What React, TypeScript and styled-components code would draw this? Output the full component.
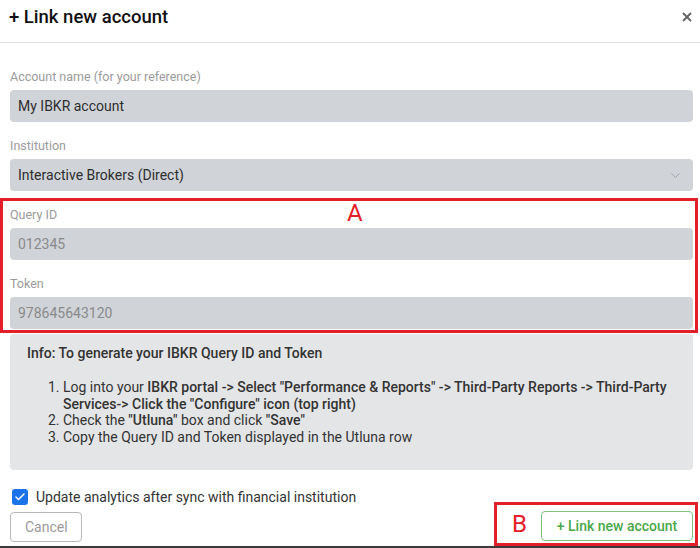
import React from 'react'
import styled, { createGlobalStyle } from 'styled-components'
import { X, ChevronDown, Check } from 'lucide-react'

const GlobalStyle = createGlobalStyle`
   html, body {
      margin: 0;
      padding: 0;
      background: #fff;
      font-family: Roboto, "Liberation Sans", Arial, sans-serif;
      color: #333;
   }
   * { box-sizing: border-box; }
`

const Modal = styled.div`
   width: 700px;
   height: 548px;
   overflow: hidden;
   display: flex;
   flex-direction: column;
   border-bottom: 2px solid #3a3a3a;
`

const Header = styled.div`
   height: 43px;
   display: flex;
   align-items: center;
   justify-content: space-between;
   padding: 0 6px 8px 9px;
   border-bottom: 1px solid #e2e2e2;
`

const Title = styled.h2`
   margin: 0;
   font-size: 18.5px;
   font-weight: 500;
   color: #111;
   line-height: 22px;
`

const Close = styled.button`
   border: 0;
   background: none;
   padding: 0;
   display: flex;
   color: #666;
   cursor: pointer;
`

const Body = styled.div`
   padding: 0 7px 0 10px;
   display: flex;
   flex-direction: column;
`

const Label = styled.label<{ $top?: number }>`
   display: block;
   font-size: 12.5px;
   line-height: 16px;
   color: #9b9b9b;
   margin: ${p => p.$top ?? 16}px 0 5px;
`

const Input = styled.div<{ $muted?: boolean }>`
   height: 32px;
   border-radius: 4px;
   background: #d0d4d9;
   display: flex;
   align-items: center;
   justify-content: space-between;
   padding: 0 10px 0 8px;
   font-size: 14px;
   color: ${p => (p.$muted ? '#8a8a8a' : '#2e2e2e')};
`

const Highlight = styled.div`
   position: relative;
   border: 3px solid #e3202a;
   margin: 7px -5px 0 -10px;
   padding: 3px 2px 1px 7px;
`

const Tag = styled.span`
   font-size: 24px;
   line-height: 24px;
   color: #e3202a;
   font-weight: 400;
`

const TagA = styled(Tag)`
   position: absolute;
   left: 344px;
   top: 0px;
`

const Info = styled.div`
   margin-top: 1px;
   height: 136px;
   border-radius: 4px;
   background: #e4e5e7;
   padding: 10px 16px 0 17px;
   font-size: 14px;
   color: #333;
`

const InfoTitle = styled.div`
   font-weight: 500;
   line-height: 18px;
`

const Steps = styled.ol`
   margin: 17px 0 0;
   padding-left: 36px;
   line-height: 16.7px;
   b { font-weight: 500; }
`

const CheckRow = styled.label`
   margin-top: 19px;
   height: 16px;
   display: flex;
   align-items: center;
   gap: 8px;
   padding-left: 2px;
   font-size: 14px;
   color: #333;
`

const Box = styled.span`
   width: 16px;
   height: 16px;
   border-radius: 3px;
   background: #1a73e8;
   color: #fff;
   display: flex;
   align-items: center;
   justify-content: center;
`

const Footer = styled.div`
   margin-top: -3px;
   display: flex;
   justify-content: space-between;
   align-items: flex-start;
`

const Button = styled.button<{ $primary?: boolean }>`
   height: 30px;
   border-radius: 4px;
   background: #fff;
   font-family: inherit;
   font-size: 14px;
   padding: 0 14px;
   cursor: pointer;
   border: 1px solid ${p => (p.$primary ? '#7cc27c' : '#b8b8b8')};
   color: ${p => (p.$primary ? '#4aa84a' : '#9a9a9a')};
   font-weight: ${p => (p.$primary ? 500 : 400)};
`

const CancelButton = styled(Button)`
   margin-top: 10px;
   width: 72px;
`

const FooterHighlight = styled.div`
   display: flex;
   align-items: center;
   gap: 14px;
   height: 44px;
   margin-right: -5px;
   border: 3px solid #e3202a;
   padding: 0 2px 0 15px;
`

const LinkButton = styled(Button)`
   width: 152px;
   margin-top: 4px;
`

export default function App() {
   return (
      <>
         <GlobalStyle />
         <Modal>
            <Header>
               <Title>+ Link new account</Title>
               <Close aria-label='close'><X size={14} strokeWidth={3.2} /></Close>
            </Header>
            <Body>
               <Label $top={26}>Account name (for your reference)</Label>
               <Input>My IBKR account</Input>
               <Label>Institution</Label>
               <Input>
                  Interactive Brokers (Direct)
                  <ChevronDown size={15} strokeWidth={1.5} color='#9aa0a6' />
               </Input>
               <Highlight>
                  <TagA>A</TagA>
                  <Label $top={3}>Query ID</Label>
                  <Input $muted>012345</Input>
                  <Label>Token</Label>
                  <Input $muted>978645643120</Input>
               </Highlight>
               <Info>
                  <InfoTitle>Info: To generate your IBKR Query ID and Token</InfoTitle>
                  <Steps>
                     <li>Log into your <b>IBKR portal -&gt; Select "Performance &amp; Reports" -&gt; Third-Party Reports -&gt; Third-Party Services-&gt; Click the "Configure" icon (top right)</b></li>
                     <li>Check the <b>"Utluna"</b> box and click <b>"Save"</b></li>
                     <li>Copy the Query ID and Token displayed in the Utluna row</li>
                  </Steps>
               </Info>
               <CheckRow>
                  <Box><Check size={12} strokeWidth={3} /></Box>
                  Update analytics after sync with financial institution
               </CheckRow>
               <Footer>
                  <CancelButton>Cancel</CancelButton>
                  <FooterHighlight>
                     <Tag>B</Tag>
                     <LinkButton $primary>+ Link new account</LinkButton>
                  </FooterHighlight>
               </Footer>
            </Body>
         </Modal>
      </>
   )
}
